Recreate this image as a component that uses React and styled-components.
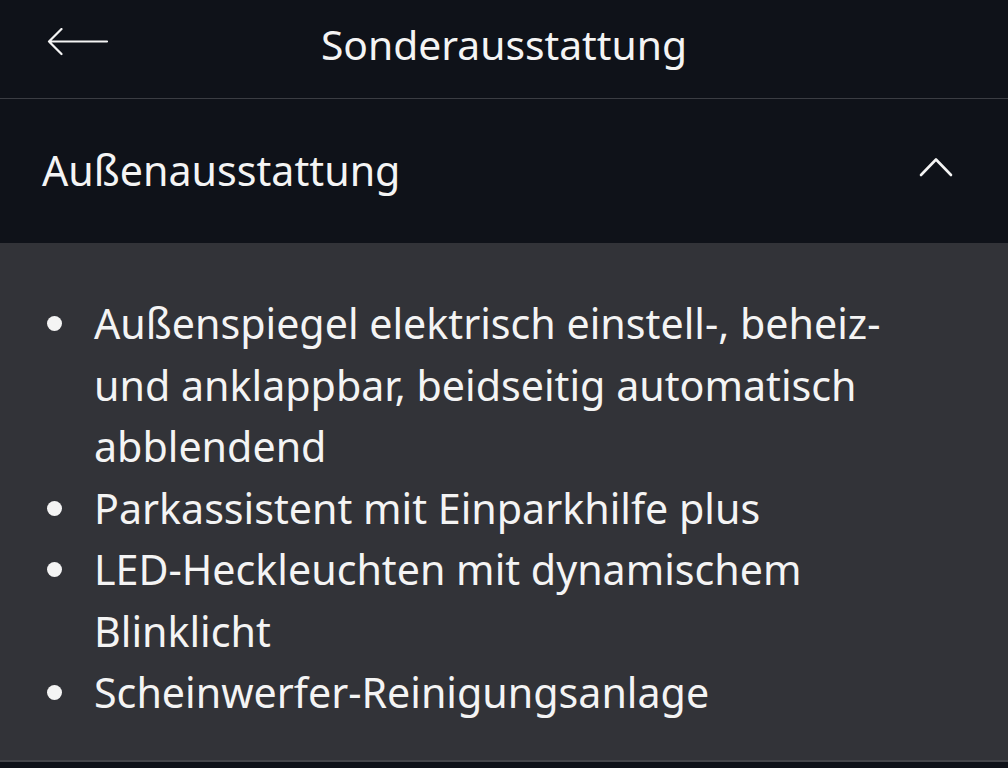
import React from "react";
import styled, { createGlobalStyle } from "styled-components";

const GlobalStyle = createGlobalStyle`
  html, body {
    margin: 0;
    padding: 0;
    background: #0f1219;
  }
  body {
    font-family: "Noto Sans", "Open Sans", sans-serif;
    color: #f4f4f4;
    -webkit-font-smoothing: antialiased;
  }
`;

const items = [
  "Außenspiegel elektrisch einstell-, beheiz- und anklappbar, beidseitig automatisch abblendend",
  "Parkassistent mit Einparkhilfe plus",
  "LED-Heckleuchten mit dynamischem Blinklicht",
  "Scheinwerfer-Reinigungsanlage",
];

export default function App() {
  return (
    <>
      <GlobalStyle />
      <Page>
        <TopBar>
          <BackButton aria-label="Zurück">
            <svg width="62" height="28" viewBox="0 0 62 28" fill="none">
              <path
                d="M60 13.5H2M14.5 1L2 13.5L14.5 26"
                stroke="#f4f4f4"
                strokeWidth="2.2"
                strokeLinecap="round"
                strokeLinejoin="round"
              />
            </svg>
          </BackButton>
          <Title>Sonderausstattung</Title>
        </TopBar>

        <SectionHeader>
          <SectionTitle>Außenausstattung</SectionTitle>
          <Chevron>
            <svg width="34" height="20" viewBox="0 0 34 20" fill="none">
              <path
                d="M2 18L17 2.5L32 18"
                stroke="#f4f4f4"
                strokeWidth="2.6"
                strokeLinecap="round"
                strokeLinejoin="round"
              />
            </svg>
          </Chevron>
        </SectionHeader>

        <Panel>
          <List>
            {items.map(text => (
              <Item key={text}>{text}</Item>
            ))}
          </List>
        </Panel>
        <BottomStrip />
      </Page>
    </>
  );
}

const Page = styled.div`
  width: 1008px;
  height: 768px;
  overflow: hidden;
  display: flex;
  flex-direction: column;
  background: #0f1219;
`;

const TopBar = styled.header`
  position: relative;
  height: 98px;
  flex: none;
  display: flex;
  align-items: center;
  justify-content: center;
  border-bottom: 1px solid #3b3d43;
`;

const BackButton = styled.button`
  position: absolute;
  left: 47px;
  top: 28px;
  padding: 0;
  border: 0;
  background: none;
  display: flex;
`;

const Title = styled.h1`
  margin: 0;
  font-size: 40.8px;
  font-weight: 400;
  line-height: 1;
  padding-bottom: 10px;
`;

const SectionHeader = styled.div`
  height: 144px;
  flex: none;
  display: flex;
  align-items: center;
  justify-content: space-between;
  padding: 0 55px 0 42px;
`;

const SectionTitle = styled.h2`
  margin: 0;
  font-size: 41.2px;
  font-weight: 400;
  line-height: 1;
`;

const Chevron = styled.span`
  display: flex;
  padding-bottom: 8px;
`;

const Panel = styled.section`
  flex: none;
  height: 519px;
  background: #323338;
  border-bottom: 2px solid #45464b;
  padding: 50px 78px 0 44px;
  box-sizing: border-box;
`;

const List = styled.ul`
  margin: 0;
  padding: 0;
  list-style: none;
`;

const Item = styled.li`
  position: relative;
  padding-left: 50px;
  font-size: 41.2px;
  line-height: 61.5px;

  &::before {
    content: "";
    position: absolute;
    left: 3px;
    top: 23px;
    width: 15px;
    height: 15px;
    border-radius: 50%;
    background: #f4f4f4;
  }
`;

const BottomStrip = styled.div`
  flex: 1;
  background: #0f1219;
`;
